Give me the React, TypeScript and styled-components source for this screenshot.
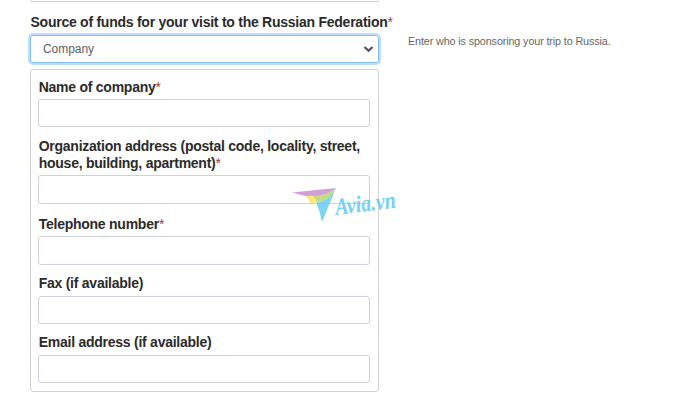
import React from "react";
import styled, { createGlobalStyle } from "styled-components";

const GlobalStyle = createGlobalStyle`
  * { box-sizing: border-box; }
  body {
    margin: 0;
    background: #fff;
    overflow: hidden;
    font-family: "Liberation Sans", Arial, sans-serif;
  }
`;

const Page = styled.main`
  position: relative;
  width: 697px;
  height: 404px;
  overflow: hidden;
  padding-left: 30px;
`;

const PreviousPanel = styled.div`
  width: 349px;
  height: 2px;
  border: 1px solid #ced0da;
  border-top: 0;
  border-radius: 0 0 3px 3px;
`;

const Row = styled.div`
  display: grid;
  grid-template-columns: 349px 1fr;
  column-gap: 29px;
`;

const Label = styled.label`
  display: block;
  padding-left: 0.7px;
  font-size: 14px;
  font-weight: 700;
  line-height: 17px;
  letter-spacing: -0.25px;
  color: #2b2b2b;
  white-space: nowrap;
`;

const SourceLabel = styled(Label)`
  margin-top: 12px;
  padding-left: 0.5px;
`;

const Required = styled.span`
  font-weight: 400;
  color: #a33a32;
`;

const SelectBox = styled.div`
  display: flex;
  align-items: center;
  justify-content: space-between;
  height: 28px;
  margin-top: 4px;
  padding: 0 4px 0 12px;
  border: 1px solid #80bdff;
  border-radius: 3px;
  box-shadow: 0 0 0 2px #bfdeff;
  font-size: 12px;
  letter-spacing: -0.05px;
  color: #5c6066;
`;

const Hint = styled.p`
  margin: 31px 0 0;
  font-size: 10.8px;
  line-height: 16px;
  letter-spacing: -0.13px;
  color: #666;
`;

const Panel = styled.section`
  width: 349px;
  height: 323px;
  margin-top: 6px;
  padding: 9px 8px 8px 7px;
  border: 1px solid #ced0da;
  border-radius: 3px;
`;

const Field = styled.div<{ $gap: number }>`
  margin-bottom: ${(p) => p.$gap}px;
`;

const Input = styled.input<{ $height: number; $offset: number }>`
  display: block;
  width: 332px;
  height: ${(p) => p.$height}px;
  margin: ${(p) => p.$offset}px 0 0;
  padding: 0 12px;
  border: 1px solid #ced0da;
  border-radius: 3px;
  background: #fff;
  outline: none;
`;

const Watermark = styled.svg`
  position: absolute;
  left: 288px;
  top: 180px;
  opacity: 0.85;
  pointer-events: none;
`;

const WatermarkText = styled.text`
  font-family: "Liberation Serif", serif;
  font-size: 24px;
  font-style: italic;
  font-weight: 700;
  fill: #62caf4;
`;

const fields = [
  { lines: ["Name of company"], required: true, gap: 11, height: 28, offset: 3 },
  {
    lines: [
      "Organization address (postal code, locality, street,",
      "house, building, apartment)",
    ],
    required: true,
    gap: 12,
    height: 29,
    offset: 3,
  },
  { lines: ["Telephone number"], required: true, gap: 10, height: 29, offset: 3 },
  { lines: ["Fax (if available)"], required: false, gap: 10, height: 28, offset: 4 },
  {
    lines: ["Email address (if available)"],
    required: false,
    gap: 0,
    height: 28,
    offset: 4,
  },
];

const Chevron = () => (
  <svg width="11" height="8" viewBox="0 0 11 8">
    <path d="M1.5 2 L5.5 5.8 L9.5 2" fill="none" stroke="#50525a" strokeWidth="2.2" />
  </svg>
);

export default function App() {
  return (
    <Page>
      <GlobalStyle />
      <PreviousPanel />
      <Row>
        <div>
          <SourceLabel>
            Source of funds for your visit to the Russian Federation
            <Required>*</Required>
          </SourceLabel>
          <SelectBox role="combobox" aria-expanded="false" tabIndex={0}>
            Company
            <Chevron />
          </SelectBox>
        </div>
        <Hint>Enter who is sponsoring your trip to Russia.</Hint>
      </Row>
      <Panel>
        {fields.map((f) => (
          <Field key={f.lines[0]} $gap={f.gap}>
            <Label>
              {f.lines.map((line, i) => (
                <React.Fragment key={line}>
                  {i > 0 && <br />}
                  {line}
                </React.Fragment>
              ))}
              {f.required && <Required>*</Required>}
            </Label>
            <Input $height={f.height} $offset={f.offset} />
          </Field>
        ))}
      </Panel>
      <Watermark width="112" height="46" viewBox="0 0 112 46">
        <path d="M4 12.5 L48 8 Q40 15 31 16 L17 16 Z" fill="#cb90d3" />
        <path d="M17 16 L26 15.8 L30 22.5 L23 23.5 Q21 19 17 16 Z" fill="#ffe56b" />
        <path d="M25 16 Q38 16 48 8 Q41 21 29 22.5 Q28 19 25 16 Z" fill="#bdd46a" />
        <path d="M28.5 22.8 Q41 21 48 8 L34 42 Q32 32 28.5 22.8 Z" fill="#66cdf5" />
        <WatermarkText
          x="0"
          y="0"
          textLength="61"
          lengthAdjust="spacingAndGlyphs"
          transform="translate(48 35) rotate(-7)"
        >
          Avia.vn
        </WatermarkText>
      </Watermark>
    </Page>
  );
}
